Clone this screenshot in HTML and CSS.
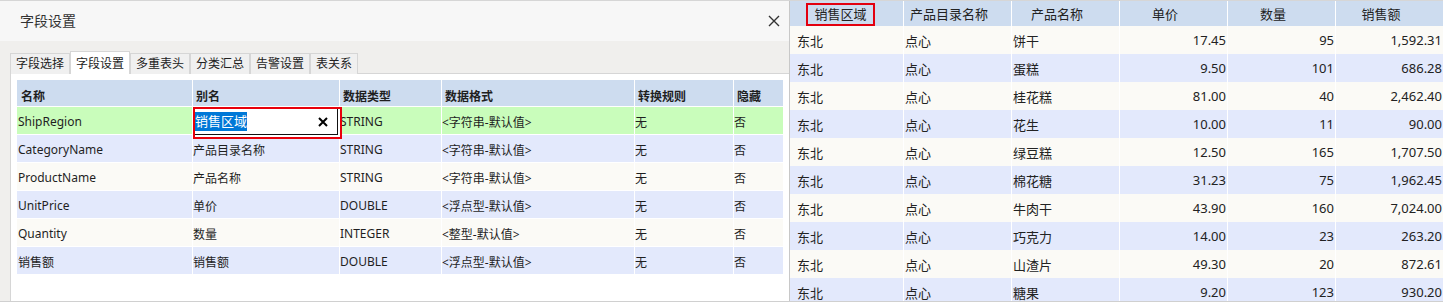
FILE: index.html
```html
<!DOCTYPE html>
<html lang="zh-CN">
<head>
  <meta charset="UTF-8" />
  <title>字段设置</title>
  <link rel="stylesheet" href="styles.css">
</head>
<body>
  <div class="page">
    <div class="dialog">
      <div class="dialog-head">
        <span class="dialog-title">字段设置</span>
        <svg class="close" width="12" height="12" viewBox="0 0 12 12">
          <path d="M1 1 L11 11 M11 1 L1 11" stroke="#333" stroke-width="1.4" fill="none" />
        </svg>
      </div>
      <div class="dialog-body">
        <div class="tabs">
          <div class="tab">字段选择</div>
          <div class="tab active">字段设置</div>
          <div class="tab">多重表头</div>
          <div class="tab">分类汇总</div>
          <div class="tab">告警设置</div>
          <div class="tab">表关系</div>
        </div>
        <div class="panel">
          <div class="ftable">
            <div class="frow fhead">
              <div>名称</div><div>别名</div><div>数据类型</div><div>数据格式</div><div>转换规则</div><div>隐藏</div>
            </div>
            <div class="frow green">
              <div>ShipRegion</div>
              <div class="edit-cell">
                <div class="editor">
                  <div class="editor-box">
                    <span class="sel">销售区域</span>
                    <svg class="clear" width="10" height="10" viewBox="0 0 10 10">
                      <path d="M1 1 L9 9 M9 1 L1 9" stroke="#000" stroke-width="2" fill="none" />
                    </svg>
                  </div>
                </div>
              </div>
              <div>STRING</div><div>&lt;字符串-默认值&gt;</div><div>无</div><div>否</div>
            </div>
            <div class="frow lav">
              <div>CategoryName</div><div>产品目录名称</div><div>STRING</div><div>&lt;字符串-默认值&gt;</div><div>无</div><div>否</div>
            </div>
            <div class="frow cream">
              <div>ProductName</div><div>产品名称</div><div>STRING</div><div>&lt;字符串-默认值&gt;</div><div>无</div><div>否</div>
            </div>
            <div class="frow lav">
              <div>UnitPrice</div><div>单价</div><div>DOUBLE</div><div>&lt;浮点型-默认值&gt;</div><div>无</div><div>否</div>
            </div>
            <div class="frow cream">
              <div>Quantity</div><div>数量</div><div>INTEGER</div><div>&lt;整型-默认值&gt;</div><div>无</div><div>否</div>
            </div>
            <div class="frow lav">
              <div>销售额</div><div>销售额</div><div>DOUBLE</div><div>&lt;浮点型-默认值&gt;</div><div>无</div><div>否</div>
            </div>
          </div>
        </div>
      </div>
    </div>

    <div class="report">
      <div class="rrow rhead">
        <div class="first"><span class="mark">销售区域</span></div><div>产品目录名称</div><div>产品名称</div><div>单价</div><div>数量</div><div>销售额</div>
      </div>
      <div class="rrow cream"><div class="first">东北</div><div>点心</div><div>饼干</div><div class="num">17.45</div><div class="num">95</div><div class="num">1,592.31</div></div>
      <div class="rrow lav"><div class="first">东北</div><div>点心</div><div>蛋糕</div><div class="num">9.50</div><div class="num">101</div><div class="num">686.28</div></div>
      <div class="rrow cream"><div class="first">东北</div><div>点心</div><div>桂花糕</div><div class="num">81.00</div><div class="num">40</div><div class="num">2,462.40</div></div>
      <div class="rrow lav"><div class="first">东北</div><div>点心</div><div>花生</div><div class="num">10.00</div><div class="num">11</div><div class="num">90.00</div></div>
      <div class="rrow cream"><div class="first">东北</div><div>点心</div><div>绿豆糕</div><div class="num">12.50</div><div class="num">165</div><div class="num">1,707.50</div></div>
      <div class="rrow lav"><div class="first">东北</div><div>点心</div><div>棉花糖</div><div class="num">31.23</div><div class="num">75</div><div class="num">1,962.45</div></div>
      <div class="rrow cream"><div class="first">东北</div><div>点心</div><div>牛肉干</div><div class="num">43.90</div><div class="num">160</div><div class="num">7,024.00</div></div>
      <div class="rrow lav"><div class="first">东北</div><div>点心</div><div>巧克力</div><div class="num">14.00</div><div class="num">23</div><div class="num">263.20</div></div>
      <div class="rrow cream"><div class="first">东北</div><div>点心</div><div>山渣片</div><div class="num">49.30</div><div class="num">20</div><div class="num">872.61</div></div>
      <div class="rrow lav"><div class="first">东北</div><div>点心</div><div>糖果</div><div class="num">9.20</div><div class="num">123</div><div class="num">930.20</div></div>
    </div>
  </div>
</body>
</html>
```

FILE: styles.css
```css
* {
  box-sizing: border-box;
}

body {
  margin: 0;
  height: 302px;
  overflow: hidden;
  font-family: "Noto Sans", "Noto Sans CJK SC", sans-serif;
  color: #1f1f1f;
  background-color: #fbfaf6;
}

.page {
  display: flex;
  height: 302px;
  border-top: 1px solid #d6d6d6;
  border-bottom: 1px solid #d0d0d0;
  overflow: hidden;
}

/* dialog */
.dialog {
  width: 790px;
  flex: none;
  display: flex;
  flex-direction: column;
  border-right: 1px solid #c8c8c8;
  background-color: #f0efed;
}

.dialog-head {
  height: 40px;
  display: flex;
  align-items: center;
  justify-content: space-between;
  padding: 0 9px 0 20px;
  background-color: #f7f7f7;
}

.dialog-title {
  font-size: 14px;
  color: #333;
  line-height: 20px;
}

.dialog-body {
  flex: 1;
  display: flex;
  flex-direction: column;
  padding-top: 11px;
}

.tabs {
  display: flex;
  align-items: flex-end;
  padding-left: 10px;
  height: 22px;
  position: relative;
  z-index: 1;
  margin-bottom: -1px;
}

.tab {
  height: 21px;
  padding: 1px 5px 0;
  font-size: 12px;
  line-height: 18px;
  color: #222;
  background-color: #f0f0f0;
  border: 1px solid #d6d6d6;
  border-bottom: none;
}

.tab.active {
  height: 23px;
  padding-top: 3px;
  background-color: #fff;
}

.panel {
  flex: 1;
  margin-left: 10px;
  padding: 6px 6px 0 6px;
  background-color: #fff;
  border-left: 1px solid #d6d6d6;
  border-top: 1px solid #d6d6d6;
}

.ftable {
  width: 766px;
}

.frow {
  display: grid;
  grid-template-columns: 175px 147px 102px 193px 99px 50px;
  height: 28px;
  font-size: 12px;
}

.frow > div {
  display: flex;
  align-items: center;
  padding-left: 1px;
  padding-top: 2px;
  border-bottom: 1px solid #fff;
  white-space: nowrap;
}

.frow > div + div {
  border-left: 1px solid #fff;
  padding-left: 0;
}

.fhead {
  height: 27px;
  font-weight: bold;
  background-color: #cddcef;
}

.fhead > div {
  padding-left: 4px;
  padding-top: 5px;
}

.fhead > div + div {
  padding-left: 3px;
}

.green {
  background-color: #c9fdbb;
}

.lav {
  background-color: #e3e9fc;
}

.cream {
  background-color: #fbfaf6;
}

.edit-cell {
  position: relative;
}

.editor {
  position: absolute;
  left: 0;
  top: 0;
  width: 149px;
  height: 32px;
  border: 2px solid #e8000b;
  background-color: #fff;
  z-index: 2;
}

.editor-box {
  position: relative;
  width: 143px;
  height: 26px;
  border-right: 1px solid #111;
  border-bottom: 1px solid #111;
}

.sel {
  position: absolute;
  left: 0;
  top: 3px;
  height: 19px;
  font-size: 13px;
  line-height: 19px;
  color: #fff;
  background-color: #0078d7;
}

.clear {
  position: absolute;
  left: 123px;
  top: 8px;
}

/* report */
.report {
  flex: 1;
  width: 653px;
}

.rrow {
  display: grid;
  grid-template-columns: 113px 108px 108px 108px 108px 108px;
  height: 28px;
  font-size: 13px;
  color: #222;
}

.rrow > div {
  display: flex;
  align-items: center;
  padding-left: 1px;
  white-space: nowrap;
}

.rrow > div + div {
  border-left: 1px solid #fff;
}

.rrow > .first {
  padding-left: 7px;
}

.rrow > .num {
  justify-content: flex-end;
  padding-right: 1px;
}

.rhead {
  height: 25px;
  background-color: #cddcef;
}

.rhead > div {
  justify-content: center;
  padding-right: 18px;
}

.rhead > .first {
  align-items: flex-end;
  padding-left: 6px;
}

.mark {
  display: inline-block;
  width: 69px;
  height: 23px;
  border: 2px solid #e3000f;
  text-align: center;
  line-height: 19px;
}
```
